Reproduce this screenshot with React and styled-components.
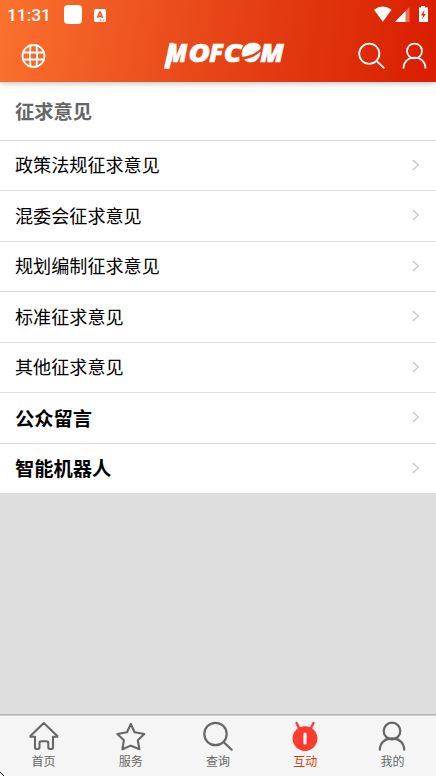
import React from "react";
import styled, { createGlobalStyle } from "styled-components";

const GlobalStyle = createGlobalStyle`
  * {
    box-sizing: border-box;
  }
  body {
    margin: 0;
    background: #dedede;
    font-family: "Liberation Sans", "Noto Sans CJK SC", sans-serif;
  }
`;

const Screen = styled.div`
  display: flex;
  flex-direction: column;
  height: 776px;
  width: 436px;
  overflow: hidden;
  background: #dedede;
`;

const Header = styled.header`
  position: relative;
  flex: none;
  height: 82px;
  background: linear-gradient(100deg, #fb722e 0%, #ec501e 36%, #e2380f 66%, #d91d00 100%);
  box-shadow: 0 1px 6px rgba(0, 0, 0, 0.28);
`;

const StatusBar = styled.div`
  display: flex;
  align-items: center;
  height: 30px;
  padding: 0 7px 0 7px;
  color: #fff;
`;

const Clock = styled.span`
  width: 57px;
  font: 500 17.3px/30px Roboto, sans-serif;
`;

const Notice = styled.span`
  width: 18px;
  height: 19px;
  margin: 0 12px 1px 0;
  border-radius: 4px;
  background: #fff;
`;

const Spacer = styled.span`
  flex: 1;
`;

const TitleBar = styled.div`
  display: flex;
  align-items: center;
  justify-content: space-between;
  height: 52px;
  padding: 0 8px 0 21px;
`;

const Actions = styled.div`
  display: flex;
  gap: 16px;
  padding-bottom: 1px;
  color: #fff;
`;

const Logo = styled.svg`
  display: block;
  margin-left: 43px;
  overflow: visible;
  font: italic 800 25.5px "Open Sans", sans-serif;
  fill: #fff;
  stroke: #fff;
  stroke-width: 0.6px;
`;

const List = styled.main`
  flex: 1;
`;

const Row = styled.div`
  display: flex;
  align-items: center;
  justify-content: space-between;
  height: ${(props) => (props.$heading ? "58.75px" : "50.5px")};
  padding: ${(props) => (props.$heading ? "2px 16px 0 15px" : "0 16px 0 15px")};
  border-bottom: 1px solid #dedede;
  background: #fff;
  color: ${(props) => (props.$heading ? "#666" : "#000")};
  font-size: ${(props) => (props.$bold ? "19.3px" : "18.1px")};
  font-weight: ${(props) => (props.$bold ? "bold" : "normal")};
  line-height: 28px;
`;

const RowText = styled.span`
  padding-top: ${(props) => (props.$bold ? "3px" : "1.5px")};
`;

const TabBar = styled.nav`
  display: flex;
  flex: none;
  height: 62px;
  border-top: 1px solid #b4b4b4;
  background: #f5f5f5;
  box-shadow: inset 0 1px 0 #d0d0d0;
`;

const Tab = styled.div`
  display: flex;
  flex: 1;
  flex-direction: column;
  align-items: center;
  padding-top: 6px;
  color: ${(props) => (props.$active ? "#d83c0b" : "#666")};
  font-size: 12px;
  line-height: 18px;
`;

const Label = styled.span`
  margin-top: 2px;
`;

const CornerMark = styled.svg`
  position: absolute;
  left: 0;
  top: 772px;
`;

const stroke = {
  fill: "none",
  stroke: "currentColor",
  strokeLinecap: "round",
  strokeLinejoin: "round",
};

const Globe = () => (
  <svg width="26" height="26" viewBox="0 0 26 26" {...stroke} stroke="#fff" strokeWidth="1.8">
    <circle cx="12.5" cy="13" r="11" />
    <path d="M2.2 9.5H22.8M2.2 16.5H22.8M9.5 2.5Q8.2 13 9.5 23.5M15.5 2.5Q16.8 13 15.5 23.5" />
  </svg>
);

const SearchIcon = ({ width = 2.2, size = 30 }) => (
  <svg width={size} height={size} viewBox="0 0 30 30" {...stroke} strokeWidth={width}>
    <circle cx="12.5" cy="13" r="11.2" />
    <path d="M20.8 21.2L28.7 28.7" />
  </svg>
);

const UserIcon = ({ width = 2.2, size = 30 }) => (
  <svg width={size} height={size} viewBox="0 0 30 30" {...stroke} strokeWidth={width}>
    <circle cx="15" cy="10" r="8.3" />
    <path d="M2.8 28.7C3 21.6 8.2 17.4 15 17.4S27 21.6 27.2 28.7" />
  </svg>
);

const HomeIcon = () => (
  <svg width="30" height="30" viewBox="0 0 30 30" {...stroke} strokeWidth="2.1">
    <path d="M14.8 2L28.3 14.9V15.7H24V26.3Q24 28 22.3 28H21Q19.3 28 19.3 26.3V22Q19.3 20.2 17.5 20.2H12.3Q10.5 20.2 10.5 22V26.3Q10.5 28 8.8 28H7.7Q6 28 6 26.3V15.7H1.4V14.9Z" />
  </svg>
);

const StarIcon = () => (
  <svg width="30" height="30" viewBox="0 0 30 30" {...stroke} strokeWidth="2.1">
    <path d="M14.8 3L18.6 11.3L28.3 13L21.8 19.2L23.4 28.3L14.8 24.6L6.4 28.3L7.9 19.2L1.4 13L11 11.3Z" />
  </svg>
);

const ChatIcon = () => (
  <svg width="30" height="30" viewBox="0 0 30 30">
    <path d="M6.5 2L9.5 8M23.5 2L20.5 8" stroke="#ff3b30" strokeWidth="2.4" strokeLinecap="round" />
    <circle cx="15" cy="17.6" r="12.4" fill="#ff3b30" />
    <path d="M15 13V22" stroke="#fff" strokeWidth="3.2" strokeLinecap="round" />
  </svg>
);

const Chevron = () => (
  <svg width="10" height="14" viewBox="0 0 10 14" fill="none" stroke="#c2c2c2" strokeWidth="1.1">
    <path d="M2.7 1L8.4 6L2.7 11" />
  </svg>
);

const AppBadge = () => (
  <svg width="12" height="13" viewBox="0 0 12 13">
    <rect width="12" height="13" rx="1.5" fill="#fff" />
    <path d="M3.4 9L5.6 3.4H6.4L8.6 9M4.2 7.2H7.8" fill="none" stroke="#ec5a24" strokeWidth="1.6" />
    <path d="M6 11.2H7.4M8.8 11.2H10.2" stroke="#ec5a24" />
  </svg>
);

// wifi, mobile signal and battery
const SystemIcons = () => (
  <svg width="55" height="18" viewBox="0 0 55 18" fill="#fff">
    <path d="M0 3.8Q8.8 -2.6 17.6 3.8L8.8 15.8Z" />
    <path d="M21 16L35.5 1V16Z" opacity="0.35" />
    <path d="M21 16L31.5 5V16Z" />
    <path d="M47 0H51V1.5H54V16H45V1.5H47Z" />
    <path d="M50.5 4L47 9.5H49L48 13.5L51.7 8H49.7Z" fill="#dc2906" />
  </svg>
);

// the second O is the striped globe, the first M has a long left leg
const MofcomLogo = () => (
  <Logo width="120" height="28" viewBox="165 42 120 28">
    <path d="M170.8 43.2H174.5L174 53L170.2 68.4H165.2Z" />
    <text x="167.8" y="61.6" textLength="20.5" lengthAdjust="spacingAndGlyphs">M</text>
    <text x="189.6" y="61.6" textLength="21.5" lengthAdjust="spacingAndGlyphs">O</text>
    <text x="210.2" y="61.6" textLength="14" lengthAdjust="spacingAndGlyphs">F</text>
    <text x="224.8" y="61.6" textLength="18" lengthAdjust="spacingAndGlyphs">C</text>
    <path d="M243 54C243 47 248 43 254 43C259 43 261.6 45 261.4 48.4C257 53 250.5 55.8 243.6 56.4Z" />
    <path d="M245.6 59.6C251.5 58.8 257.5 56 261.2 52C260.5 58.5 256.8 62 251.8 62C248.8 62 246.8 61.2 245.6 59.6Z" />
    <text x="261.3" y="61.6" textLength="23.5" lengthAdjust="spacingAndGlyphs">M</text>
  </Logo>
);

const rows = [
  { text: "政策法规征求意见" },
  { text: "混委会征求意见" },
  { text: "规划编制征求意见" },
  { text: "标准征求意见" },
  { text: "其他征求意见" },
  { text: "公众留言", bold: true },
  { text: "智能机器人", bold: true },
];

const tabs = [
  { text: "首页", Icon: HomeIcon },
  { text: "服务", Icon: StarIcon },
  { text: "查询", Icon: SearchIcon },
  { text: "互动", Icon: ChatIcon, active: true },
  { text: "我的", Icon: UserIcon },
];

const App = () => (
  <Screen>
    <GlobalStyle />
    <Header>
      <StatusBar>
        <Clock>11:31</Clock>
        <Notice />
        <AppBadge />
        <Spacer />
        <SystemIcons />
      </StatusBar>
      <TitleBar>
        <Globe />
        <MofcomLogo />
        <Actions>
          <SearchIcon size={27} width={2} />
          <UserIcon size={27} width={2} />
        </Actions>
      </TitleBar>
    </Header>
    <List>
      <Row $heading $bold>
        <RowText $bold>征求意见</RowText>
      </Row>
      {rows.map((row) => (
        <Row key={row.text} $bold={row.bold}>
          <RowText $bold={row.bold}>{row.text}</RowText>
          <Chevron />
        </Row>
      ))}
    </List>
    <TabBar>
      {tabs.map(({ text, Icon, active }) => (
        <Tab key={text} $active={active}>
          <Icon />
          <Label>{text}</Label>
        </Tab>
      ))}
    </TabBar>
    <CornerMark width="4" height="4" viewBox="0 0 4 4">
      <path d="M0 0H1V1H0ZM1 1H2V2H1ZM2 2H3V3H2ZM3 3H4V4H3Z" fill="#000" />
    </CornerMark>
  </Screen>
);

export default App;
